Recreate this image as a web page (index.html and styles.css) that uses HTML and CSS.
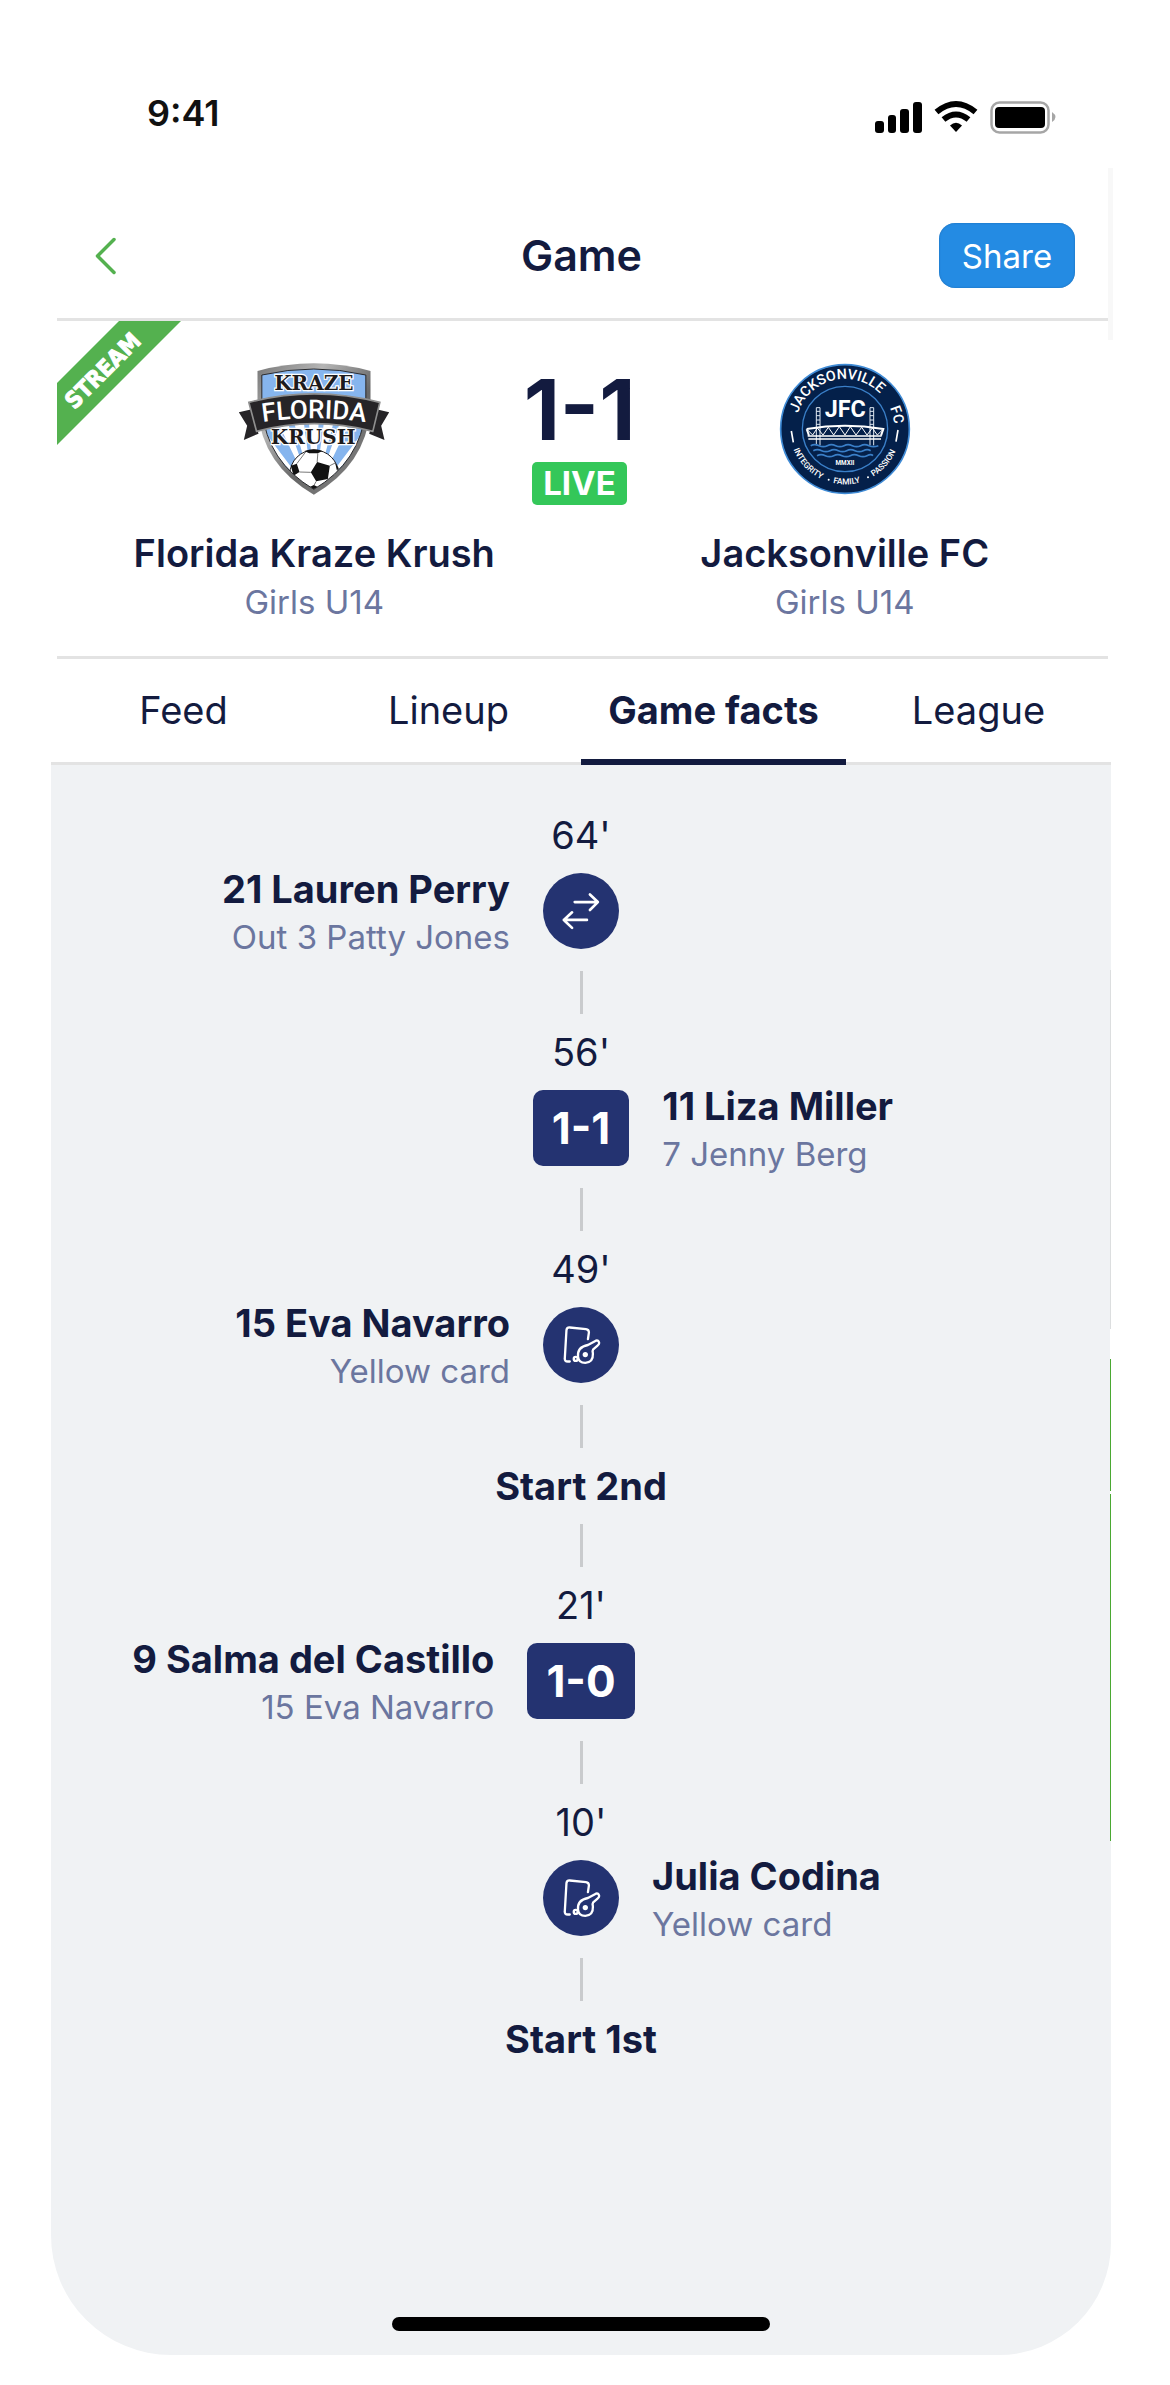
FILE: index.html
```html
<!DOCTYPE html>
<html lang="en">
<head>
<meta charset="utf-8">
<title>Game</title>
<link rel="stylesheet" href="styles.css">
</head>
<body>
<div class="phone">
	<div class="status">
		<span class="time">9:41</span>
		<svg class="status-icons" width="182" height="38" viewBox="0 0 182 38">
			<rect x="0" y="23" width="9" height="12" rx="3"/>
			<rect x="13" y="17" width="8" height="18" rx="3"/>
			<rect x="25" y="11" width="9" height="24" rx="3"/>
			<rect x="38" y="4" width="9" height="31" rx="3"/>
			<path d="M61.500 14 Q81 -2 100.500 14" fill="none" stroke="#000" stroke-width="6"/>
			<path d="M68.500 21.500 Q81 11.500 93.500 21.500" fill="none" stroke="#000" stroke-width="6"/>
			<path d="M75 27.500 Q81 22 87 27.500 L81 34Z"/>
			<rect x="116.500" y="4.500" width="57" height="30" rx="8" fill="#fff" stroke="#a6a6a6" stroke-width="2.500"/>
			<rect x="120" y="9" width="50" height="21" rx="4"/>
			<path d="M177 14 Q184 19 177 24Z" fill="#a6a6a6"/>
		</svg>
	</div>

	<header class="nav">
		<button type="button" class="back" aria-label="Back">
			<svg width="22" height="38" viewBox="0 0 22 38"><path d="M19 2.500 L2.500 19 L19 35.500" fill="none" stroke="#54b14f" stroke-width="3.500" stroke-linecap="round" stroke-linejoin="round"/></svg>
		</button>
		<h1>Game</h1>
		<button type="button" class="share">Share</button>
	</header>

	<section class="match">
		<svg class="ribbon" width="124" height="124" viewBox="0 0 124 124">
			<path d="M0 62 L62 0 H124 L0 124Z" fill="#54b14f"/>
			<text class="stream" transform="translate(45 49) rotate(-45)" x="0" y="9">STREAM</text>
		</svg>

		<div class="team">
			<svg width="152" height="132" viewBox="600 158 453 396">
				<defs>
					<linearGradient id="steel" x1="0" y1="0" x2="1" y2="1">
						<stop offset="0" stop-color="#777"/>
						<stop offset=".3" stop-color="#b5b5b5"/>
						<stop offset=".6" stop-color="#666"/>
						<stop offset="1" stop-color="#8c8c8c"/>
					</linearGradient>
					<clipPath id="inner"><path d="M670 194 Q826 158 982 194 V300 Q965 455 826 537 Q687 455 670 300Z"/></clipPath>
				</defs>
				<path d="M657 182 Q826 136 996 182 V300 Q980 465 826 553 Q672 465 657 300Z" fill="url(#steel)"/>
				<g clip-path="url(#inner)">
					<rect x="660" y="160" width="330" height="390" fill="#86b5ee"/>
					<g fill="#fff">
						<path d="M826 560 L715 330 H745Z M826 560 L765 330 H795Z M826 560 L811 330 H841Z M826 560 L857 330 H887Z M826 560 L907 330 H937Z M826 560 L690 380 L700 420Z M826 560 L962 380 L952 420Z"/>
					</g>
					<circle cx="827" cy="492" r="73" fill="#fff" stroke="#1d1b1d" stroke-width="3"/>
					<path d="M798 422 Q826 412 852 422 L838 429 H812Z M836 455 L874 466 L868 506 L833 513 L817 486Z M757 466 L775 460 L783 485 L765 496Z M890 458 L901 474 L895 480Z M812 531 L826 524 L840 531 L826 542Z" fill="#111"/>
					<path d="M836 455 L838 429 M817 486 L783 485 M833 513 L826 526 M874 466 L890 458 M775 460 L802 424 M868 506 L880 515" fill="none" stroke="#333" stroke-width="2"/>
				</g>
				<path d="M670 194 Q826 158 982 194 V300 Q965 455 826 537 Q687 455 670 300Z" fill="none" stroke="#2b2a2c" stroke-width="3"/>
				<text class="slab" x="826" y="240">KRAZE</text>
				<text class="slab" x="824" y="400">KRUSH</text>
				<path d="M601 306 L640 297 L660 370 L616 389 L626 346Z M1052 306 L1014 297 L992 370 L1038 389 L1028 346Z" fill="#262427"/>
				<path d="M631 276 Q826 225 1024 276 L1003 363 Q826 317 654 363Z" fill="#262427" stroke="#8f8f8f" stroke-width="5"/>
				<path id="florida" d="M640 341 Q826 307 1014 341" fill="none"/>
				<text class="banner"><textPath href="#florida" startOffset="50%">FLORIDA</textPath></text>
			</svg>
			<h2>Florida Kraze Krush</h2>
			<p>Girls U14</p>
		</div>

		<div class="score">
			<strong>1-1</strong>
			<span class="live">LIVE</span>
		</div>

		<div class="team">
			<svg width="132" height="132" viewBox="114 69 396 396">
				<circle cx="312" cy="267" r="193" fill="#04204a" stroke="#3f8bd6" stroke-width="5"/>
				<circle cx="312" cy="267" r="128" fill="none" stroke="#3a7fc8" stroke-width="4"/>
				<path id="top" d="M165 282 A148 148 0 1 1 459 282" fill="none"/>
				<path id="bottom" d="M146 267 A166 166 0 0 0 478 267" fill="none"/>
				<g class="ring">
					<text><textPath href="#top" startOffset="43%">JACKSONVILLE</textPath></text>
					<text><textPath href="#top" startOffset="89%">FC</textPath></text>
				</g>
				<g class="motto">
					<text><textPath href="#bottom" startOffset="24%">INTEGRITY</textPath></text>
					<text><textPath href="#bottom" startOffset="51%">FAMILY</textPath></text>
					<text><textPath href="#bottom" startOffset="77%">PASSION</textPath></text>
				</g>
				<circle cx="263" cy="419" r="3" fill="#fff"/>
				<circle cx="381" cy="412" r="3" fill="#fff"/>
				<path d="M151 273 L157 307 M471 270 L465 305" stroke="#fff" stroke-width="5"/>
				<text class="jfc" x="313" y="232">JFC</text>
				<path d="M226 316 V203 H237 V316 M387 316 V203 H398 V316 M226 214 H237 M226 227 H237 M226 240 H237 M226 253 H237 M387 214 H398 M387 227 H398 M387 240 H398 M387 253 H398" fill="none" stroke="#dfe8f2" stroke-width="3"/>
				<path d="M197 267 Q312 247 427 267 L420 287 M197 267 L204 287" fill="none" stroke="#fff" stroke-width="6"/>
				<path d="M200 288 H422 M202 297 H420" stroke="#fff" stroke-width="4"/>
				<path d="M200 270 L215 285 L229 264 L246 285 L262 262 L278 285 L295 260 L312 285 L328 260 L345 285 L362 262 L378 285 L394 264 L409 285 L424 270" fill="none" stroke="#fff" stroke-width="3"/>
				<g fill="none" stroke="#3a7fc8" stroke-width="5">
					<path d="M209 317 q12 -6 25 0 t25 0 t25 0 t25 0 t25 0 t25 0 t25 0 t28 0"/>
					<path d="M217 332 q12 -6 25 0 t25 0 t25 0 t25 0 t25 0 t25 0 t22 0"/>
					<path d="M228 347 q12 -6 25 0 t25 0 t25 0 t25 0 t25 0 t25 0 t18 0"/>
				</g>
				<text class="year" x="312" y="375">MMXII</text>
			</svg>
			<h2>Jacksonville FC</h2>
			<p>Girls U14</p>
		</div>
	</section>

	<nav class="tabs">
		<a href="#">Feed</a>
		<a href="#">Lineup</a>
		<a href="#" class="active">Game facts</a>
		<a href="#">League</a>
	</nav>

	<main class="facts">
		<svg class="sprite" width="0" height="0">
			<symbol id="swap" viewBox="67 39 230 230">
				<path d="M163 127 H233 M209 104 L233 127 L209 151 M200 181 H130 M155 158 L130 181 L155 205" fill="none" stroke="#fff" stroke-width="8" stroke-linecap="round" stroke-linejoin="round"/>
			</symbol>
			<symbol id="card" viewBox="67 53 230 230">
				<g fill="none" stroke="#fff" stroke-width="7" stroke-linecap="round" stroke-linejoin="round">
					<path d="M148 218 H142 Q132 218 133 208 L138 123 Q139 114 148 115 L197 120 Q206 121 206 130 L203 150"/>
					<path d="M173 203 C171 181 187 171 203 168 L227 155 Q235 152 237 162 Q237 166 232 170 L219 181 Q216 185 218 194 C219 213 208 221 195 222 C182 222 174 214 173 203Z"/>
					<circle cx="166" cy="210" r="6"/>
				</g>
				<circle cx="195" cy="197" r="8" fill="#fff"/>
			</symbol>
		</svg>

		<div class="minute">64'</div>
		<div class="event">
			<div class="info home"><b>21 Lauren Perry</b><span>Out 3 Patty Jones</span></div>
			<svg class="dot"><use href="#swap"/></svg>
		</div>
		<div class="line"></div>

		<div class="minute">56'</div>
		<div class="event">
			<div class="goal">1-1</div>
			<div class="info away"><b>11 Liza Miller</b><span>7 Jenny Berg</span></div>
		</div>
		<div class="line"></div>

		<div class="minute">49'</div>
		<div class="event">
			<div class="info home"><b>15 Eva Navarro</b><span>Yellow card</span></div>
			<svg class="dot"><use href="#card"/></svg>
		</div>
		<div class="line"></div>

		<div class="minute period">Start 2nd</div>
		<div class="line short"></div>

		<div class="minute">21'</div>
		<div class="event">
			<div class="info home"><b>9 Salma del Castillo</b><span>15 Eva Navarro</span></div>
			<div class="goal">1-0</div>
		</div>
		<div class="line"></div>

		<div class="minute">10'</div>
		<div class="event">
			<svg class="dot"><use href="#card"/></svg>
			<div class="info away"><b>Julia Codina</b><span>Yellow card</span></div>
		</div>
		<div class="line"></div>

		<div class="minute period">Start 1st</div>

		<div class="home-bar"></div>
	</main>
</div>
</body>
</html>
```

FILE: styles.css
```css
*{
	box-sizing: border-box;
}
body{
	margin: 0;
	background-color: #fff;
	color: #131b3f;
	font-family: Inter, "Liberation Sans", sans-serif;
	font-size: 38px;
}
h1, h2, p{
	margin: 0;
}
button{
	border: 0;
	font-family: inherit;
	cursor: pointer;
}
.phone{
	position: relative;
	margin: 0 59px 30px 51px;
}
/* pale edge at the right of the header */
.phone::after{
	content: "";
	position: absolute;
	top: 168px;
	right: -2px;
	width: 5px;
	height: 172px;
	background-color: #f8f8f8;
}

/* status bar */
.status{
	display: flex;
	justify-content: space-between;
	height: 168px;
	padding: 90px 54px 32px 96px;
}
.time{
	font-size: 36px;
	font-weight: 600;
	line-height: 46px;
	color: #111;
}
.status-icons{
	margin-top: 8px;
}

/* top bar */
.nav{
	display: grid;
	grid-template-columns: 136px 1fr 136px;
	align-items: center;
	margin: 0 3px 0 6px;
	padding: 55px 33px 30px 31px;
	border-bottom: 3px solid #e3e3e3;
}
.nav h1{
	font-size: 43px;
	font-weight: 600;
	line-height: 65px;
	text-align: center;
}
.back{
	justify-self: start;
	display: flex;
	padding: 0 7px;
	background: none;
}
.share{
	height: 65px;
	border-radius: 16px;
	background-color: #248be3;
	box-shadow: inset 0 0 2px #1a68b0;
	color: #fff;
	font-size: 33px;
}

/* score header */
.match{
	position: relative;
	display: grid;
	grid-template-columns: 1fr 104px 1fr;
	margin: 0 3px 0 6px;
	padding: 42px 50px 29px 44px;
	border-bottom: 3px solid #e3e3e3;
}
.ribbon{
	position: absolute;
	top: 0;
	left: 0;
}
.stream{
	font-family: "DejaVu Sans Condensed", "DejaVu Sans", sans-serif;
	font-size: 23px;
	font-weight: bold;
	text-anchor: middle;
	fill: #fff;
	stroke: #fff;
}
.team{
	display: flex;
	flex-direction: column;
	align-items: center;
	white-space: nowrap;
}
.team h2{
	margin-top: 34px;
	font-size: 38px;
	font-weight: 600;
	line-height: 48px;
}
.team p{
	color: #6b769f;
	font-size: 33px;
	line-height: 50px;
}
.slab{
	font: bold 60px "DejaVu Serif", serif;
	text-anchor: middle;
	fill: #1d1b1d;
	stroke: #fff;
	stroke-width: 7px;
	paint-order: stroke;
}
.banner{
	font: 500 78px Roboto, sans-serif;
	text-anchor: middle;
	fill: #fff;
}
.ring{
	font: 500 43px Roboto, sans-serif;
	text-anchor: middle;
	fill: #fff;
}
.motto{
	font: 500 25px Roboto, sans-serif;
	text-anchor: middle;
	fill: #fff;
}
.jfc{
	font: bold 70px Roboto, sans-serif;
	text-anchor: middle;
	fill: #fff;
}
.year{
	font: bold 19px Roboto, sans-serif;
	text-anchor: middle;
	fill: #fff;
}
.score{
	display: flex;
	flex-direction: column;
	align-items: center;
	white-space: nowrap;
}
.score strong{
	font-size: 84px;
	font-weight: 700;
	line-height: 94px;
}
.live{
	margin-top: 5px;
	padding: 0 11px;
	border-radius: 5px;
	background-color: #34c759;
	color: #fff;
	font-size: 33px;
	font-weight: 700;
	line-height: 43px;
}

/* tabs */
.tabs{
	display: flex;
	box-shadow: inset 0 -3px #e3e3e3;
}
.tabs a{
	flex: 1 1 0;
	padding-bottom: 3px;
	color: #131b3f;
	line-height: 103px;
	text-align: center;
	text-decoration: none;
	white-space: nowrap;
}
.tabs .active{
	box-shadow: inset 0 -6px #131b3f;
	font-weight: 700;
}

/* timeline */
.facts{
	position: relative;
	padding: 46px 0 24px;
	border-radius: 0 0 112px 120px;
	background-color: #f0f2f4;
}
.facts::after{
	content: "";
	position: absolute;
	top: 205px;
	right: 0;
	width: 1px;
	height: 871px;
	background: linear-gradient(#dcdedf 359px, #fff 359px, #fff 389px, #4aa832 389px, #4aa832 521px, #fff 521px, #fff 524px, #4aa832 524px);
}
.sprite{
	position: absolute;
}
.minute{
	line-height: 48px;
	text-align: center;
}
.period{
	font-weight: 700;
}
.event{
	display: grid;
	grid-template-columns: 1fr auto 1fr;
	align-items: start;
	column-gap: 33px;
	height: 76px;
	margin-top: 14px;
}
.info{
	display: flex;
	flex-direction: column;
	grid-row: 1;
	margin-top: -8px;
	line-height: 48px;
	white-space: nowrap;
}
.info b{
	font-weight: 700;
}
.info span{
	color: #6b769f;
	font-size: 33px;
}
.home{
	grid-column: 1;
	text-align: right;
}
.away{
	grid-column: 3;
}
.dot{
	grid-column: 2;
	grid-row: 1;
	width: 76px;
	height: 76px;
	border-radius: 50%;
	background-color: #243371;
}
.goal{
	grid-column: 2;
	grid-row: 1;
	padding: 0 19px;
	border-radius: 10px;
	background-color: #243371;
	color: #fff;
	font-size: 44px;
	font-weight: 700;
	line-height: 76px;
}
.line{
	width: 3px;
	height: 43px;
	margin: 22px auto 14px;
	background-color: #c9cbcd;
}
.short{
	margin-top: 14px;
}
.home-bar{
	width: 378px;
	height: 14px;
	margin: 254px auto 0;
	border-radius: 7px;
	background-color: #000;
}
```
